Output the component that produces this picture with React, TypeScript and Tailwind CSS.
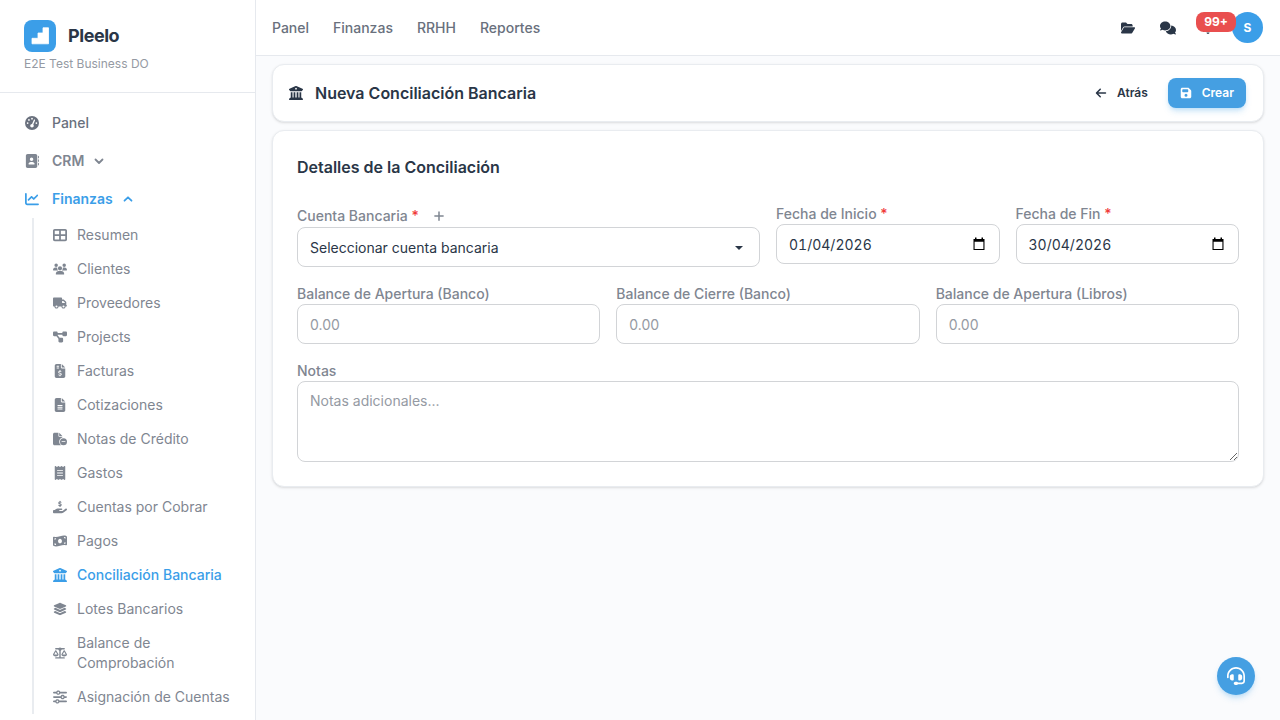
import { useState } from "react";
import {
  FaAddressBook,
  FaArrowLeft,
  FaBell,
  FaBuildingColumns,
  FaChartLine,
  FaComments,
  FaDiagramProject,
  FaFileCircleMinus,
  FaFileInvoiceDollar,
  FaFileLines,
  FaFloppyDisk,
  FaFolderOpen,
  FaGaugeHigh,
  FaHandHoldingDollar,
  FaHeadset,
  FaLayerGroup,
  FaMoneyBillWave,
  FaPlus,
  FaReceipt,
  FaScaleBalanced,
  FaSliders,
  FaTableCellsLarge,
  FaTruck,
  FaUsers,
} from "react-icons/fa6";

const financeLinks = [
  { label: "Resumen", icon: FaTableCellsLarge },
  { label: "Clientes", icon: FaUsers },
  { label: "Proveedores", icon: FaTruck },
  { label: "Projects", icon: FaDiagramProject },
  { label: "Facturas", icon: FaFileInvoiceDollar },
  { label: "Cotizaciones", icon: FaFileLines },
  { label: "Notas de Crédito", icon: FaFileCircleMinus },
  { label: "Gastos", icon: FaReceipt },
  { label: "Cuentas por Cobrar", icon: FaHandHoldingDollar },
  { label: "Pagos", icon: FaMoneyBillWave },
  { label: "Conciliación Bancaria", icon: FaBuildingColumns, active: true },
  { label: "Lotes Bancarios", icon: FaLayerGroup },
  { label: "Balance de Comprobación", icon: FaScaleBalanced },
  { label: "Asignación de Cuentas", icon: FaSliders },
];

const inputClass =
  "block h-10 w-full rounded-lg border border-[#d2d4d7] bg-white px-3 text-sm text-[#2a3647] placeholder:text-[#959aa3]";

function Logo() {
  return (
    <svg className="size-8" viewBox="0 0 32 32" aria-hidden="true">
      <rect width="32" height="32" rx="8" fill="#3b9ee8" />
      <path
        d="M8 18.300h6V13h5V7.800h5.500v16H8z"
        fill="#fff"
        stroke="#fff"
        strokeWidth="0.8"
        strokeLinejoin="round"
      />
    </svg>
  );
}

function Chevron(props: { up?: boolean }) {
  return (
    <svg
      className="size-2.5"
      viewBox="0 0 10 10"
      fill="none"
      stroke="currentColor"
      strokeWidth="1.8"
      strokeLinecap="round"
      strokeLinejoin="round"
      aria-hidden="true"
    >
      <path d={props.up ? "M1.500 6.700L5 3.300l3.500 3.400" : "M1.500 3.500L5 7l3.500-3.500"} />
    </svg>
  );
}

function Sidebar() {
  return (
    <aside className="flex w-64 shrink-0 flex-col overflow-hidden border-r border-[#e6e9ee] bg-white">
      <div className="border-b border-[#e6e9ee] px-6 pt-5 pb-5">
        <a href="#" className="flex items-center gap-3">
          <Logo />
          <span className="text-lg font-bold tracking-tight text-[#2a3647]">Pleelo</span>
        </a>
        <p className="mt-1 text-xs text-[#959aa3]">E2E Test Business DO</p>
      </div>

      <nav className="flex flex-col px-3 pt-[11px] text-sm">
        <a href="#" className="flex h-[38px] items-center gap-3 px-3 font-medium text-[#69707d]">
          <FaGaugeHigh className="size-4 p-px" />
          Panel
        </a>
        <button className="flex h-[38px] items-center gap-3 px-3 font-semibold text-[#7f8691]">
          <FaAddressBook className="size-4 p-px" />
          <span className="flex items-center gap-2.5">
            CRM
            <Chevron />
          </span>
        </button>
        <button className="flex h-[38px] items-center gap-3 px-3 font-semibold text-[#3b9ee8]">
          <FaChartLine className="size-4 p-px" />
          <span className="flex items-center gap-2.5">
            Finanzas
            <Chevron up />
          </span>
        </button>

        <ul className="ml-5 flex flex-col border-l-2 border-[#e9ecf0]">
          {financeLinks.map((ele) => (
            <li key={ele.label}>
              <a
                href="#"
                className={
                  ele.active
                    ? "flex items-center gap-2.5 py-[7px] pr-3 pl-[19px] font-medium text-[#3b9ee8]"
                    : "flex items-center gap-2.5 py-[7px] pr-3 pl-[19px] text-[#7f8691]"
                }
              >
                <ele.icon className="size-3.5 shrink-0" />
                {ele.label}
              </a>
            </li>
          ))}
        </ul>
      </nav>
    </aside>
  );
}

function TopBar() {
  return (
    <header className="flex h-14 shrink-0 items-center justify-between border-b border-[#e6e9ee] bg-white pr-[17px] pl-4">
      <nav className="flex gap-6 text-sm font-medium text-[#69707d]">
        <a href="#">Panel</a>
        <a href="#">Finanzas</a>
        <a href="#">RRHH</a>
        <a href="#">Reportes</a>
      </nav>
      <div className="flex items-center text-[#2a3647]">
        <button aria-label="Archivos" className="flex size-10 items-center justify-center">
          <FaFolderOpen className="size-3.5" />
        </button>
        <button aria-label="Mensajes" className="flex size-10 items-center justify-center">
          <FaComments className="size-4" />
        </button>
        <button aria-label="Notificaciones" className="relative flex size-10 items-center justify-center">
          <FaBell className="size-3" />
          <span className="absolute top-1 left-2 z-10 flex h-5 w-10 items-center justify-center rounded-lg bg-[#e94f4f] text-xs font-bold text-white">
            99+
          </span>
        </button>
        <button
          aria-label="Cuenta"
          className="ml-1 flex size-[31px] items-center justify-center rounded-full bg-[#3b9ee8] text-xs font-bold text-white"
        >
          S
        </button>
      </div>
    </header>
  );
}

function DateField(props: any) {
  const [value, setValue] = useState(props.value);

  return (
    <div>
      <label htmlFor={props.id} className="block text-sm font-medium text-[#7f8691]">
        {props.label} <span className="text-[#f03a3a]">*</span>
      </label>
      <div className="relative">
        <input
          id={props.id}
          className={inputClass + " tabular-nums"}
          placeholder="dd/mm/aaaa"
          value={value}
          onChange={(e) => setValue(e.target.value)}
        />
        <button
          type="button"
          aria-label="Abrir calendario"
          className="absolute inset-y-0 right-3.5 flex items-center text-black"
        >
          <svg className="h-[14px] w-[14px]" viewBox="0 0 14 14" aria-hidden="true">
            <path
              d="M3 0.500h1.500V2h5V0.500H11V2h1.500v11h-11V2H3zM2.600 4.800v7.100h8.800V4.800z"
              fill="currentColor"
              fillRule="evenodd"
            />
          </svg>
        </button>
      </div>
    </div>
  );
}

function AmountField(props: any) {
  return (
    <div>
      <label htmlFor={props.id} className="block text-sm font-medium text-[#7f8691]">
        {props.label}
      </label>
      <input id={props.id} className={inputClass} inputMode="decimal" placeholder="0.00" />
    </div>
  );
}

function App() {
  return (
    <div className="flex h-screen overflow-hidden bg-[#fafbfd] font-[Inter,sans-serif] text-[#2a3647]">
      <Sidebar />
      <div className="flex min-w-0 flex-1 flex-col">
        <TopBar />
        <main className="flex flex-col gap-2 px-4 pt-2">
          <div className="flex h-[58px] items-center justify-between rounded-xl border border-[#e9ecf0] bg-white pr-[17px] pl-4 shadow-sm">
            <h1 className="flex items-center gap-3 text-base font-semibold">
              <FaBuildingColumns className="size-3.5" />
              Nueva Conciliación Bancaria
            </h1>
            <div className="flex items-center gap-2 text-xs font-semibold">
              <button className="flex h-[30px] items-center gap-2.5 px-3">
                <FaArrowLeft className="size-3" />
                Atrás
              </button>
              <button className="flex h-[30px] items-center gap-2.5 rounded-lg bg-[#459fe2] px-3 text-white shadow-md shadow-[#3b9ee8]/25">
                <FaFloppyDisk className="size-3" />
                Crear
              </button>
            </div>
          </div>

          <form className="rounded-xl border border-[#e9ecf0] bg-white p-6 shadow-sm">
            <h2 className="text-base font-semibold">Detalles de la Conciliación</h2>

            <div className="mt-[25px] flex flex-col gap-[17px]">
              <div className="grid grid-cols-4 gap-4">
                <div className="col-span-2">
                  <div className="flex h-[23px] items-center gap-3 text-sm font-medium text-[#7f8691]">
                    <label htmlFor="account">
                      Cuenta Bancaria <span className="text-[#f03a3a]">*</span>
                    </label>
                    <button type="button" aria-label="Agregar cuenta" className="px-0.5">
                      <FaPlus className="size-3" />
                    </button>
                  </div>
                  <div className="relative">
                    <select id="account" className={inputClass + " appearance-none pt-0.5"}>
                      <option>Seleccionar cuenta bancaria</option>
                    </select>
                    <svg
                      className="pointer-events-none absolute top-[19px] right-[17px] h-1 w-2"
                      viewBox="0 0 8 4"
                      aria-hidden="true"
                    >
                      <path d="M0 0h8L4 4z" fill="#2a3647" />
                    </svg>
                  </div>
                </div>
                <DateField id="start" label="Fecha de Inicio" value="01/04/2026" />
                <DateField id="end" label="Fecha de Fin" value="30/04/2026" />
              </div>

              <div className="grid grid-cols-3 gap-4">
                <AmountField id="open-bank" label="Balance de Apertura (Banco)" />
                <AmountField id="close-bank" label="Balance de Cierre (Banco)" />
                <AmountField id="open-books" label="Balance de Apertura (Libros)" />
              </div>

              <div>
                <label htmlFor="notes" className="block text-sm font-medium text-[#7f8691]">
                  Notas
                </label>
                <textarea
                  id="notes"
                  className="block h-[81px] w-full rounded-lg border border-[#d2d4d7] bg-white px-3 py-[9px] text-sm placeholder:text-[#959aa3]"
                  placeholder="Notas adicionales..."
                />
              </div>
            </div>
          </form>
        </main>
      </div>

      <button
        aria-label="Soporte"
        className="fixed right-[25px] bottom-[25px] flex size-[38px] items-center justify-center rounded-full bg-[#459fe2] text-white shadow-md shadow-[#3b9ee8]/25"
      >
        <FaHeadset className="size-[18px]" />
      </button>
    </div>
  );
}

export default App;
